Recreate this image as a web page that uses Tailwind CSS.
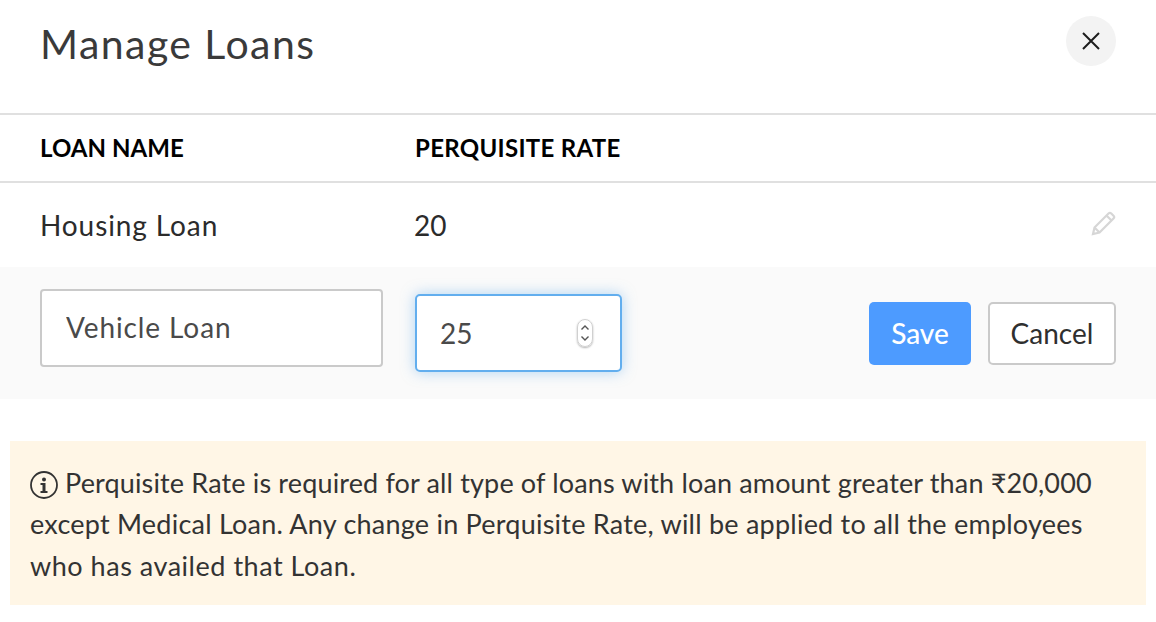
<!DOCTYPE html>
<html lang="en">
<head>
  <meta charset="UTF-8" />
  <title>Manage Loans</title>
  <script src="https://cdn.jsdelivr.net/npm/@tailwindcss/browser@4"></script>
</head>
<body class="bg-white text-[#2f2f2f] font-['Lato',sans-serif] overflow-hidden">
  <main class="w-[1156px] h-[622px] flex flex-col">
    <!-- Header -->
    <div class="h-[115px] border-b-2 border-[#e0e0e0] flex items-start justify-between pl-[40px] pr-[40px]">
      <h1 class="mt-[19px] text-[41px] leading-[50px] tracking-[1.45px] font-normal text-[#3a3a3a]">Manage Loans</h1>
      <button type="button" class="mt-[16px] w-[50px] h-[50px] rounded-full bg-[#f3f3f3] flex items-center justify-center" aria-label="Close">
        <svg width="18" height="18" viewBox="0 0 18 18" fill="none" stroke="#1c1c1c" stroke-width="2"><path d="M1 1l16 16M17 1L1 17" /></svg>
      </button>
    </div>

    <!-- Table head -->
    <div class="h-[68px] border-b-2 border-[#e0e0e0] flex items-center pl-[40px] text-[24px] font-bold text-black tracking-[0.3px]">
      <div class="w-[375px] tracking-[0.05px]">LOAN NAME</div>
      <div>PERQUISITE RATE</div>
    </div>

    <!-- Saved row -->
    <div class="h-[84px] flex items-center pl-[40px] pr-[39px] text-[28px] text-[#2b2b2b]">
      <div class="w-[374px] pb-[1px] tracking-[0.9px]">Housing Loan</div>
      <div class="flex-1 pb-[1px]">20</div>
      <svg class="mb-[4px]" width="26" height="26" viewBox="0 0 26 26" fill="none" stroke="#d6d6d6" stroke-width="2.200"><path d="M2 24l1.5-6.5L17.5 3.500a2 2 0 0 1 2.800 0l2.200 2.200a2 2 0 0 1 0 2.800L8.500 22.500zM15.500 5.500l5 5M3.500 17.500l5 5" /></svg>
    </div>

    <!-- Edit row -->
    <div class="h-[132px] bg-[#fafafa] flex items-start pl-[40px] pr-[40px]">
      <input type="text" value="Vehicle Loan" class="mt-[22px] w-[343px] h-[78px] px-[24px] pb-[2px] bg-white border-2 border-[#cacaca] rounded-[4px] text-[28px] tracking-[0.9px] text-[#4a4a4a] outline-none" />
      <div class="mt-[27px] ml-[32px] w-[207px] h-[78px] pl-[23px] pr-[27px] bg-white border-2 border-[#62aeee] rounded-[5px] shadow-[0_0_14px_rgba(98,174,238,0.5)] flex items-center justify-between text-[28px] text-[#4a4a4a]">
        <span>25</span>
        <span class="w-[16px] h-[28px] rounded-[8px] border border-[#d0d0d0] shadow-[0_1px_2px_rgba(0,0,0,0.3)] flex items-center justify-center">
          <svg width="10" height="20" viewBox="0 0 10 20" fill="none" stroke="#555" stroke-width="1.400"><path d="M1.500 6.500L5 3l3.500 3.500M1.500 13.500L5 17l3.500-3.500" /></svg>
        </span>
      </div>
      <div class="ml-auto mt-[35px] flex gap-[17px] text-[28px]">
        <button type="button" class="w-[102px] h-[63px] pb-[2px] rounded-[5px] bg-[#4d9bff] text-white font-medium">Save</button>
        <button type="button" class="w-[128px] h-[63px] pb-[2px] rounded-[5px] bg-white border-2 border-[#cacaca] text-[#2f2f2f]">Cancel</button>
      </div>
    </div>

    <!-- Info note -->
    <div class="mt-[42px] mx-[10px] h-[164px] bg-[#fff6e6] px-[20px] pt-[20.500px] text-[27px] leading-[41.500px] text-[#333] tracking-[0.23px]">
      <p>
        <span class="block tracking-[0.15px]"><svg class="inline-block align-[-6px] mr-[7px]" width="28" height="28" viewBox="0 0 28 28" fill="none"><circle cx="14" cy="14" r="13" stroke="#333" stroke-width="1.800" /><circle cx="14" cy="8.500" r="2" fill="#333" /><path d="M10.500 12h5v8h2v2h-7v-2h2v-6h-2z" fill="#333" /></svg>Perquisite Rate is required for all type of loans with loan amount greater than ₹20,000</span>
        <span class="block">except Medical Loan. Any change in Perquisite Rate, will be applied to all the employees</span>
        <span class="block tracking-[0.53px]">who has availed that Loan.</span>
      </p>
    </div>
  </main>
</body>
</html>
